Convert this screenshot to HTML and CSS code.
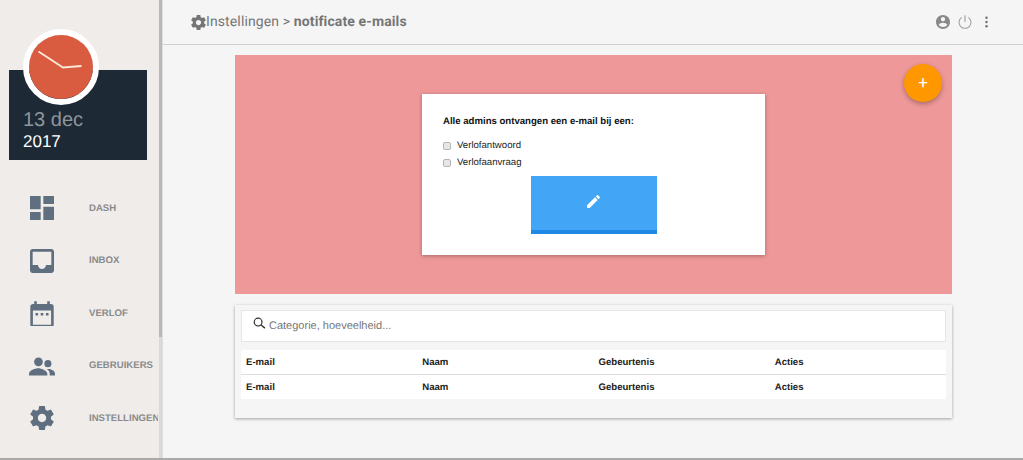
FILE: index.html
```html
<!DOCTYPE html>
<html lang="en">
<head>
  <meta charset="UTF-8">
  <meta name="viewport" content="width=device-width, initial-scale=1.0">
  <title>Instellingen</title>
  <link rel="stylesheet" href="styles.css">
</head>
<body>
  <div class="app">
    <aside class="sidebar">
      <div class="datecard">
        <div class="clock">
          <svg width="64" height="64" viewBox="0 0 64 64">
            <circle cx="32" cy="32" r="32" fill="#d95b40"/>
            <path d="M9.500 16.500 L34 32.500 L52.500 31" stroke="#fbe9d8" stroke-width="1.800" fill="none"/>
          </svg>
        </div>
        <div class="day">13 dec</div>
        <div class="year">2017</div>
      </div>
      <nav class="menu">
        <a class="menuitem">
          <svg class="menuicon" viewBox="3 3 18 18"><path d="M3 13h8V3H3v10zm0 8h8v-6H3v6zm10 0h8V11h-8v10zm0-18v6h8V3h-8z"/></svg>
          <span>DASH</span>
        </a>
        <a class="menuitem">
          <svg class="menuicon" viewBox="3 3 18 18"><path d="M19 3H4.990C3.890 3 3 3.900 3 5v14c0 1.100.890 2 1.990 2H19c1.100 0 2-.9 2-2V5c0-1.100-.9-2-2-2zm0 12h-4c0 1.660-1.350 3-3 3s-3-1.340-3-3H4.990V5H19v10z"/></svg>
          <span>INBOX</span>
        </a>
        <a class="menuitem">
          <svg class="menuicon cal" viewBox="3 1 18 20"><path d="M9 11H7v2h2v-2zm4 0h-2v2h2v-2zm4 0h-2v2h2v-2zm2-7h-1V2h-2v2H8V2H6v2H5c-1.110 0-1.990.9-1.990 2L3 20c0 1.100.890 2 2 2h14c1.100 0 2-.9 2-2V6c0-1.100-.9-2-2-2zm0 16H5V9h14v11z"/></svg>
          <span>VERLOF</span>
        </a>
        <a class="menuitem">
          <svg class="menuicon wide" viewBox="1 4 22 16"><circle cx="9" cy="8.500" r="3.700"/><path d="M9 14c-2.670 0-8 1.840-8 4.500V20h15.500v-1.500c0-2.660-5.830-4.500-7.500-4.500z"/><circle cx="17" cy="10" r="3"/><path d="M17.500 14.500c-.4 0-.9 0-1.400.100 1.400 1 2.400 2.300 2.400 3.900V20H23v-1.500c0-2.660-3.500-4-5.500-4z"/></svg>
          <span>GEBRUIKERS</span>
        </a>
        <a class="menuitem">
          <svg class="menuicon wide" viewBox="2 2 20 20"><path d="M19.430 12.980c.040-.320.070-.640.070-.980s-.030-.660-.070-.980l2.110-1.650c.190-.150.240-.420.120-.640l-2-3.460c-.120-.220-.390-.300-.610-.220l-2.490 1c-.520-.400-1.080-.730-1.690-.980l-.380-2.650C14.460 2.180 14.250 2 14 2h-4c-.250 0-.460.180-.490.420l-.380 2.650c-.610.250-1.170.590-1.690.980l-2.490-1c-.230-.090-.490 0-.610.220l-2 3.460c-.130.220-.070.490.120.640l2.110 1.650c-.040.320-.070.650-.070.980s.030.660.070.980l-2.110 1.650c-.190.150-.240.420-.120.640l2 3.460c.120.220.390.300.610.220l2.490-1c.520.400 1.080.730 1.690.980l.380 2.650c.030.240.240.420.490.420h4c.250 0 .460-.180.490-.420l.380-2.650c.610-.250 1.170-.590 1.690-.980l2.490 1c.230.090.490 0 .610-.220l2-3.460c.120-.220.070-.490-.120-.640l-2.110-1.650zM12 15.500c-1.930 0-3.500-1.570-3.500-3.500s1.570-3.500 3.500-3.500 3.500 1.570 3.500 3.500-1.570 3.500-3.500 3.500z"/></svg>
          <span>INSTELLINGEN</span>
        </a>
      </nav>
    </aside>
    <div class="scrollbar"><div class="thumb"></div></div>

    <main class="main">
      <header class="topbar">
        <h1 class="crumb">
          <svg class="crumbicon" viewBox="2 2 20 20"><path d="M19.430 12.980c.040-.320.070-.640.070-.980s-.030-.660-.070-.980l2.110-1.650c.190-.150.240-.420.120-.640l-2-3.460c-.120-.220-.390-.300-.610-.220l-2.490 1c-.520-.400-1.080-.730-1.690-.980l-.380-2.650C14.460 2.180 14.250 2 14 2h-4c-.250 0-.460.180-.490.420l-.380 2.650c-.610.250-1.170.590-1.690.980l-2.490-1c-.230-.090-.490 0-.610.220l-2 3.460c-.130.220-.070.490.120.640l2.110 1.650c-.040.320-.070.650-.070.980s.030.660.070.980l-2.110 1.650c-.190.150-.240.420-.120.640l2 3.460c.120.220.390.300.610.220l2.490-1c.520.400 1.080.730 1.690.980l.380 2.650c.030.240.240.420.490.420h4c.250 0 .460-.180.490-.420l.380-2.650c.610-.250 1.170-.590 1.690-.980l2.490 1c.230.090.490 0 .610-.220l2-3.460c.120-.220.070-.490-.120-.640l-2.110-1.650zM12 15.500c-1.930 0-3.500-1.570-3.500-3.500s1.570-3.500 3.500-3.500 3.500 1.570 3.500 3.500-1.570 3.500-3.500 3.500z"/></svg>
          <span>Instellingen &gt; <b>notificate e-mails</b></span>
        </h1>
        <div class="topicons">
          <svg class="topicon" viewBox="2 2 20 20"><path d="M12 2C6.480 2 2 6.480 2 12s4.480 10 10 10 10-4.480 10-10S17.520 2 12 2zm0 3c1.660 0 3 1.340 3 3s-1.340 3-3 3-3-1.340-3-3 1.340-3 3-3zm0 14.200c-2.500 0-4.710-1.280-6-3.220.030-1.990 4-3.080 6-3.080 1.990 0 5.970 1.090 6 3.080-1.290 1.940-3.500 3.220-6 3.220z"/></svg>
          <svg class="topicon" viewBox="2 2 20 21"><path d="M12 2.500v10M7 5.500a9 9 0 1 0 10 0" fill="none" stroke="#9e9e9e" stroke-width="1.600"/></svg>
          <svg class="topicon dots" viewBox="0 0 6 20"><circle cx="3" cy="3" r="2"/><circle cx="3" cy="10" r="2"/><circle cx="3" cy="17" r="2"/></svg>
        </div>
      </header>

      <div class="content">
        <section class="pinkpanel">
          <button class="fab">+</button>
          <form class="notifycard">
            <p class="notifytitle">Alle admins ontvangen een e-mail bij een:</p>
            <label class="check"><input type="checkbox"> Verlofantwoord</label>
            <label class="check"><input type="checkbox"> Verlofaanvraag</label>
            <button type="button" class="editbtn">
              <svg width="13" height="13" viewBox="3 3 18 18"><path fill="#fff" d="M3 17.250V21h3.750L17.810 9.940l-3.750-3.750L3 17.250zM20.710 7.040c.390-.390.390-1.020 0-1.410l-2.340-2.340c-.390-.390-1.020-.390-1.410 0l-1.830 1.830 3.750 3.750 1.830-1.830z"/></svg>
            </button>
          </form>
        </section>

        <section class="tablepanel">
          <div class="searchbox">
            <svg class="searchicon" viewBox="0 0 14 14"><circle cx="5.500" cy="5.500" r="4.200" fill="none" stroke="#333" stroke-width="1.300"/><path d="M8.700 8.700 L12.800 12" stroke="#333" stroke-width="1.500"/></svg>
            <input class="searchinput" type="text" placeholder="Categorie, hoeveelheid...">
          </div>
          <table class="mailtable">
            <thead>
              <tr><th>E-mail</th><th>Naam</th><th>Gebeurtenis</th><th>Acties</th></tr>
            </thead>
            <tfoot>
              <tr><th>E-mail</th><th>Naam</th><th>Gebeurtenis</th><th>Acties</th></tr>
            </tfoot>
          </table>
        </section>
      </div>
    </main>
  </div>
</body>
</html>
```
FILE: styles.css
```css
html, body {
  margin: 0;
  height: 100%;
  overflow: hidden;
}

body {
  font-family: "Liberation Sans", Arial, sans-serif;
  background-color: #f5f5f5;
  text-rendering: geometricPrecision;
}

.app {
  display: flex;
  height: 458px;
  border-bottom: 2px solid #a9a9a9;
}

/* sidebar */
.sidebar {
  width: 159px;
  flex-shrink: 0;
  background-color: #efecea;
  overflow: hidden;
  padding-top: 70px;
  box-sizing: border-box;
}

.scrollbar {
  width: 4px;
  flex-shrink: 0;
  background-color: #d9d9d9;
  border-right: 1px solid #ddd;
  box-sizing: border-box;
}

.thumb {
  height: 337px;
  background-color: #b8b8b8;
}

.datecard {
  position: relative;
  width: 138px;
  height: 90px;
  margin-left: 9px;
  background-color: #1d2935;
  box-sizing: border-box;
  padding: 39px 0 0 14px;
}

.clock {
  position: absolute;
  left: 14px;
  top: -41px;
  width: 64px;
  height: 64px;
  border: 6px solid #fff;
  border-radius: 50%;
  display: flex;
}

.day {
  font-size: 20px;
  line-height: 23px;
  color: #8f959b;
}

.year {
  font-size: 17px;
  line-height: 19px;
  color: #fff;
}

.menu {
  width: 158px;
  margin-top: 22px;
  display: flex;
  flex-direction: column;
  overflow: hidden;
}

.menuitem {
  display: flex;
  align-items: center;
  height: 52.500px;
  white-space: nowrap;
  font-size: 9.600px;
  font-weight: bold;
  color: #8a8a8a;
}

.menuicon {
  width: 24px;
  height: 24px;
  margin-left: 30px;
  margin-right: 35px;
  fill: #5f6f7f;
  flex-shrink: 0;
}

.menuicon.cal {
  height: 26px;
}

.menuicon.wide {
  width: 26px;
  margin-left: 29px;
  margin-right: 34px;
}

/* header */
.main {
  flex: 1;
  min-width: 0;
}

.topbar {
  height: 44px;
  border-bottom: 1px solid #cfcfcf;
  display: flex;
  align-items: center;
  justify-content: space-between;
  padding: 0 34px 0 28px;
}

.crumb {
  margin: 0;
  display: flex;
  align-items: center;
  font-family: Roboto, sans-serif;
  font-size: 14px;
  font-weight: normal;
  letter-spacing: 0.12px;
  color: #757575;
}

.crumbicon {
  width: 15px;
  height: 15px;
  fill: #757575;
}

.topicons {
  display: flex;
  align-items: center;
  gap: 8px;
}

.topicon {
  width: 14px;
  height: 14px;
  fill: #8a8a8a;
}

.topicon.dots {
  width: 5px;
  height: 12px;
  margin-left: 4px;
  fill: #6e6e6e;
}

/* content */
.content {
  width: 717px;
  margin-left: 72px;
  padding-top: 10px;
}

.pinkpanel {
  position: relative;
  height: 239px;
  background-color: #ee9899;
  box-sizing: border-box;
  padding-top: 39px;
  margin-bottom: 11px;
}

.fab {
  position: absolute;
  right: 10px;
  top: 9px;
  width: 38px;
  height: 38px;
  border: none;
  border-radius: 50%;
  background-color: #ff9800;
  color: #fff;
  font-family: Roboto, sans-serif;
  font-size: 17px;
  padding: 0 0 2px;
  box-shadow: 0 2px 5px rgba(0, 0, 0, 0.3);
}

.notifycard {
  width: 343px;
  height: 161px;
  margin-left: 187px;
  background-color: #fff;
  box-sizing: border-box;
  padding: 21px 21px 0;
  box-shadow: 0 1px 4px rgba(0, 0, 0, 0.3);
  font-size: 9.600px;
  color: #222;
}

.notifytitle {
  margin: 0 0 9px;
  font-weight: bold;
  line-height: 13px;
  color: #111;
}

.check {
  display: flex;
  align-items: center;
  gap: 6px;
  height: 17px;
}

.check input {
  appearance: none;
  margin: 0;
  width: 8px;
  height: 8px;
  background-color: #e6e6e6;
  border: 1px solid #b5b5b5;
  border-radius: 2px;
}

.editbtn {
  display: flex;
  align-items: center;
  justify-content: center;
  width: 126.500px;
  height: 58px;
  margin: 5px 0 0 87.500px;
  padding: 0 0 4px;
  border: none;
  border-bottom: 4px solid #1e88e5;
  background-color: #42a5f5;
  box-sizing: border-box;
}

.tablepanel {
  height: 113px;
  box-sizing: border-box;
  padding: 5px 6px 0;
  background-color: #f5f5f5;
  box-shadow: 0 1px 3px rgba(0, 0, 0, 0.35);
}

.searchbox {
  position: relative;
  display: flex;
  align-items: center;
  height: 32px;
  background-color: #fff;
  border: 1px solid #e6e6e6;
  box-sizing: border-box;
  padding-left: 27px;
}

.searchicon {
  position: absolute;
  left: 11px;
  top: 6px;
  width: 13px;
  height: 13px;
}

.searchinput {
  flex: 1;
  border: none;
  outline: none;
  padding: 0;
  font-family: "Liberation Sans", Arial, sans-serif;
  font-size: 11px;
  text-rendering: geometricPrecision;
}

.searchinput::placeholder {
  color: #777;
}

.mailtable {
  width: 100%;
  margin-top: 8px;
  border-collapse: collapse;
  table-layout: fixed;
  background-color: #fff;
  font-size: 9.600px;
}

.mailtable th {
  height: 24px;
  padding: 0 5px;
  text-align: left;
  font-weight: bold;
  color: #222;
}

.mailtable thead th {
  border-bottom: 1px solid #ddd;
}
```
